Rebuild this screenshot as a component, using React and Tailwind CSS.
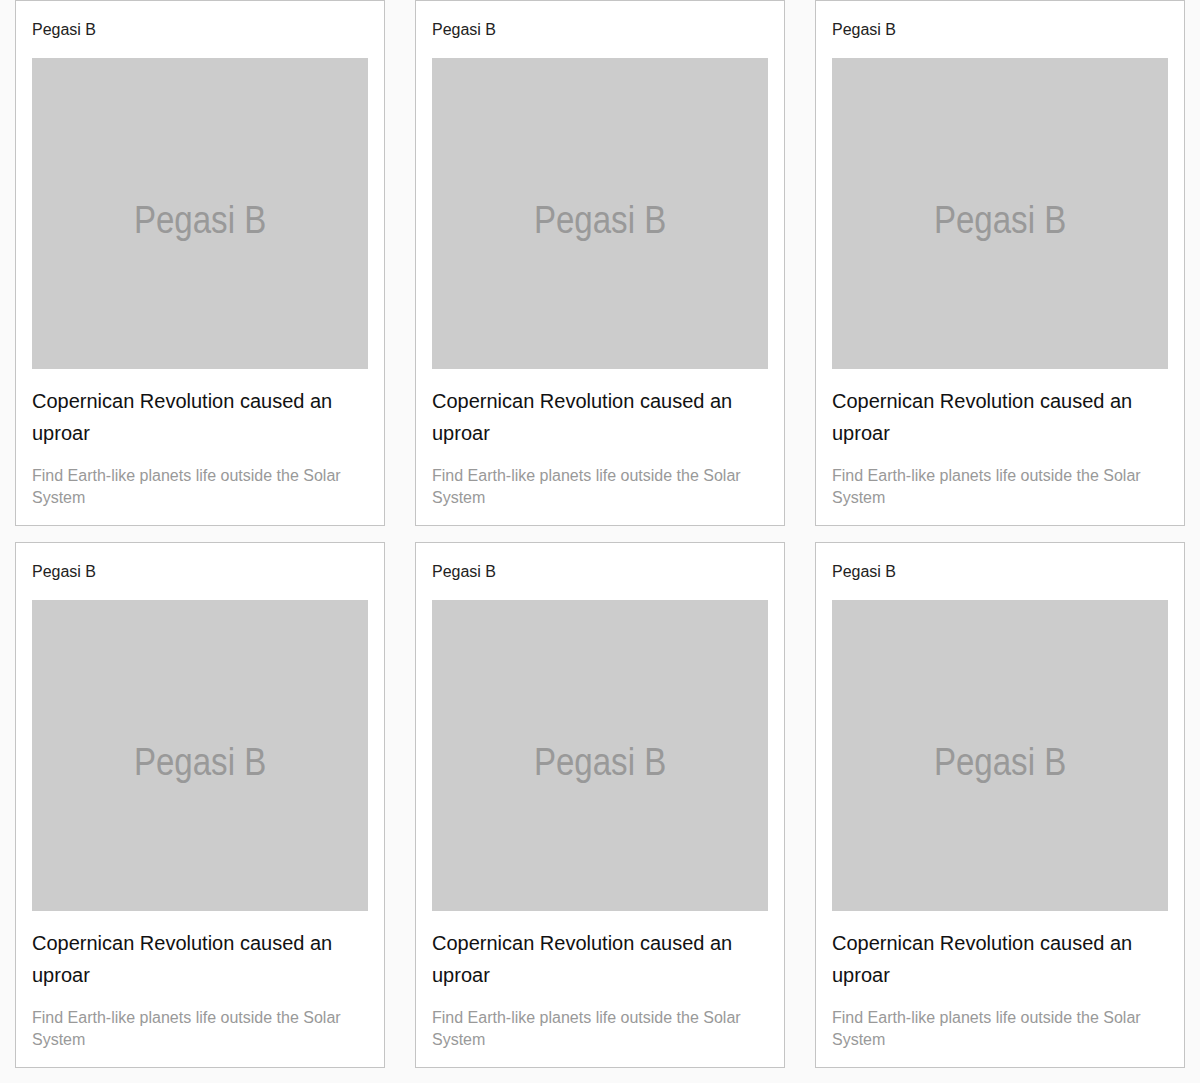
import React from "react";

function Card() {
  return (
    <div className="border border-[#c4c4c4] bg-white p-4 h-[526px]">
      <div className="text-[16px] leading-[26px] text-[#222] mb-[15px]">Pegasi B</div>
      <div className="h-[311px] bg-[#cccccc] flex items-center justify-center overflow-hidden">
        <span className="text-[38px] leading-none text-[#999999] scale-x-[0.87] translate-y-[6px] inline-block">
          Pegasi B
        </span>
      </div>
      <div className="mt-4 text-[20px] leading-[32px] text-[#111]">
        Copernican Revolution caused an uproar
      </div>
      <div className="mt-4 text-[16px] leading-[22px] text-[#999999]">
        Find Earth-like planets life outside the Solar System
      </div>
    </div>
  );
}

export default function App() {
  return (
    <div
      className="min-h-[1083px] bg-[#fafafa] px-[15px]"
      style={{ fontFamily: '"Liberation Sans", Arial, sans-serif' }}
    >
      <div className="grid grid-cols-3 gap-x-[30px] gap-y-4">
        {Array.from({ length: 6 }).map((_, i) => (
          <Card key={i} />
        ))}
      </div>
    </div>
  );
}
